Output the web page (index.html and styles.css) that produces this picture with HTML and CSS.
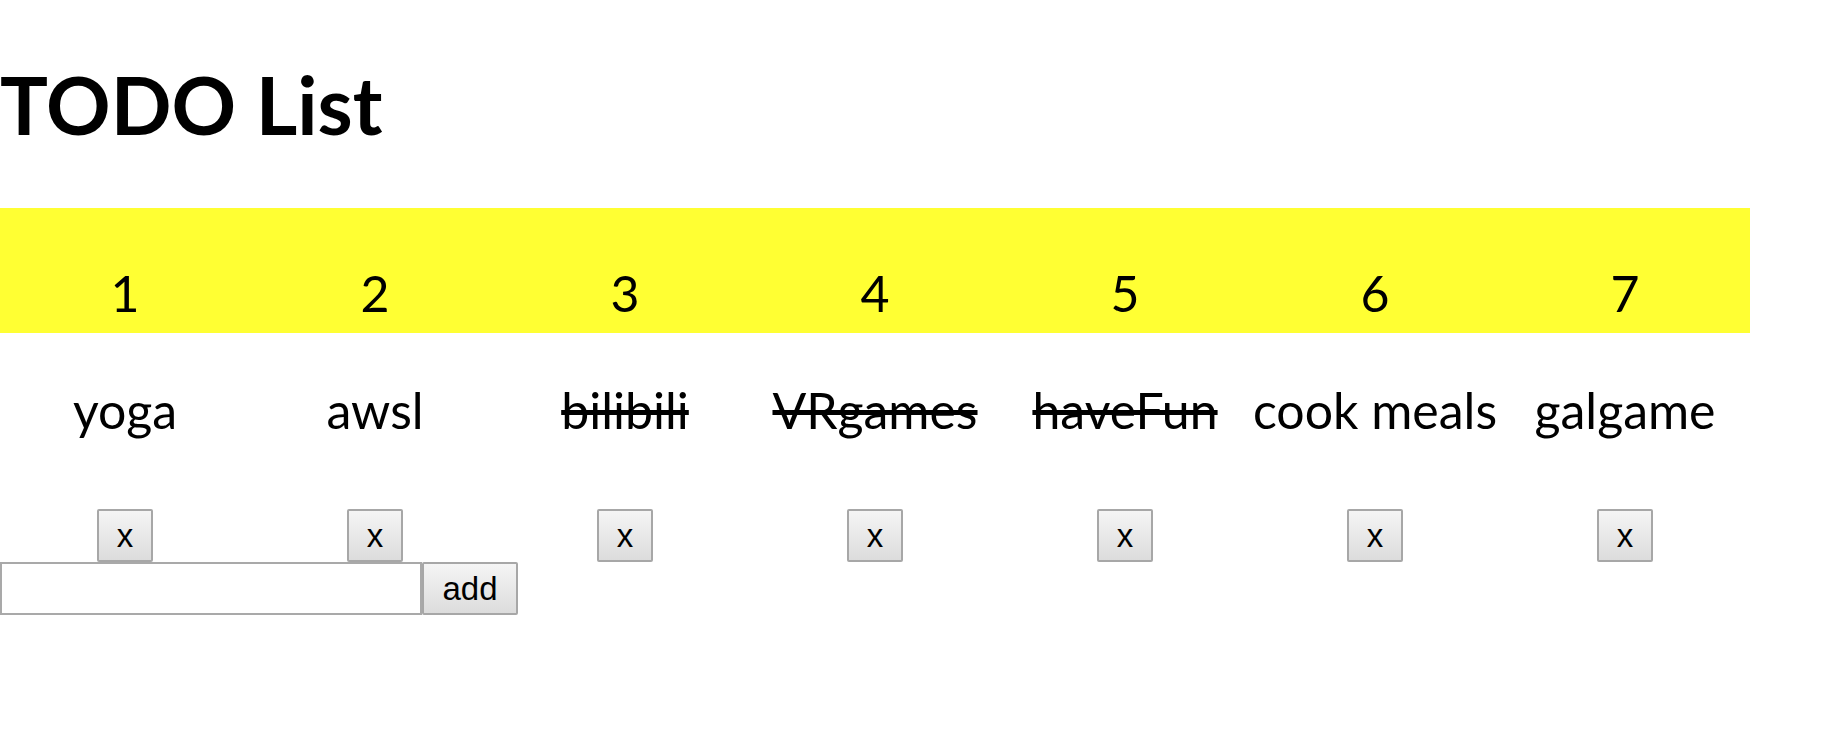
FILE: index.html
```html
<!DOCTYPE html>
<html lang="en">
<head>
<meta charset="utf-8">
<title>TODO List</title>
<link rel="stylesheet" href="styles.css">
</head>
<body>
<h1 class="title">TODO List</h1>
<table class="todo">
  <tr class="nums">
    <th>1</th><th>2</th><th>3</th><th>4</th><th>5</th><th>6</th><th>7</th>
  </tr>
  <tr class="items">
    <td>yoga</td>
    <td>awsl</td>
    <td class="done">bilibili</td>
    <td class="done">VRgames</td>
    <td class="done">haveFun</td>
    <td>cook meals</td>
    <td>galgame</td>
  </tr>
  <tr class="actions">
    <td><button class="btn">x</button></td>
    <td><button class="btn">x</button></td>
    <td><button class="btn">x</button></td>
    <td><button class="btn">x</button></td>
    <td><button class="btn">x</button></td>
    <td><button class="btn">x</button></td>
    <td><button class="btn">x</button></td>
  </tr>
</table>
<div class="adder"><input class="field" type="text"><button class="btn add">add</button></div>
</body>
</html>
```
FILE: styles.css
```css
html, body {
  margin: 0;
  padding: 0;
  background: #fff;
  color: #000;
}
body {
  font-family: Lato, "Noto Sans", sans-serif;
}
.title {
  margin: 64px 0 64px 0;
  font-size: 80px;
  line-height: 80px;
  font-weight: 700;
}
.todo {
  width: 1750px;
  table-layout: fixed;
  border-collapse: collapse;
  border-spacing: 0;
}
.todo th, .todo td {
  width: 250px;
  padding: 0;
  text-align: center;
  vertical-align: top;
  font-size: 50px;
  line-height: 50px;
  font-weight: 400;
  white-space: nowrap;
}
.nums th {
  background: #ffff33;
  height: 50px;
  padding: 60px 0 15px 0;
}
.items td {
  padding-top: 52px;
}
.done {
  text-decoration: line-through;
  text-decoration-thickness: 5px;
}
.actions td {
  padding-top: 74px;
  line-height: 0;
}
.btn {
  box-sizing: border-box;
  height: 53px;
  margin: 0;
  padding: 0 15px;
  font-family: "Liberation Sans", Arial, sans-serif;
  font-size: 33px;
  line-height: 1;
  color: #000;
  border: 2px solid #a7a7a7;
  border-radius: 2px;
  background: linear-gradient(#f5f5f5, #dcdcdc);
  vertical-align: top;
}
.actions .btn {
  width: 56px;
}
.adder {
  display: flex;
  height: 53px;
}
.field {
  box-sizing: border-box;
  width: 422px;
  height: 53px;
  margin: 0;
  border: 2px solid #a9a9a9;
  background: #fff;
}
.add {
  width: 96px;
}
```
